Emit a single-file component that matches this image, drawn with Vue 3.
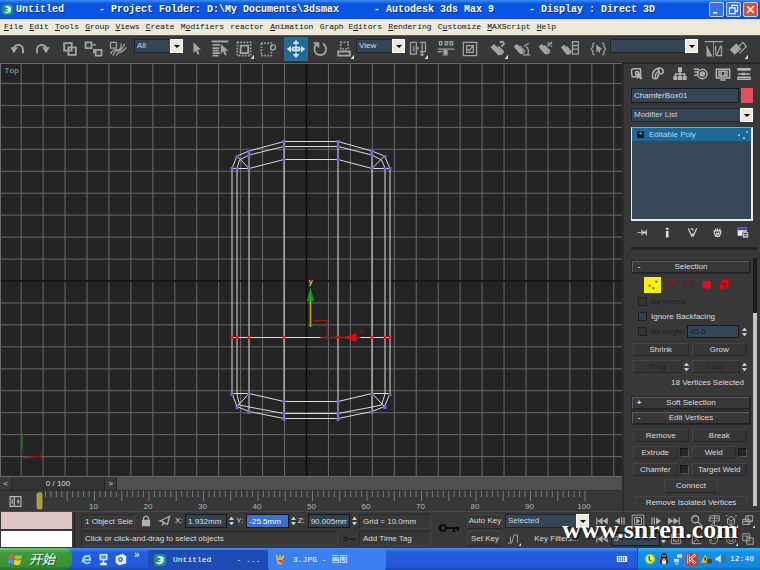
<script setup>
import { ref } from 'vue'

const menus = ['_File', '_Edit', '_Tools', '_Group', '_Views', '_Create', 'M_odifiers', 'reactor', '_Animation', 'Graph E_ditors', '_Rendering', 'C_ustomize', '_MAXScript', '_Help'].map((m) => {
  const i = m.indexOf('_')
  return i < 0 ? [m, '', ''] : [m.slice(0, i), m[i + 1], m.slice(i + 2)]
})

// Each icon: s = stroked outline, d = dashed outline, f = filled shape, c = flyout corner, w = heavy stroke
const icons = {
  undo: { s: 'M7 12V11Q8 7 13 7Q18 8 18 13V17', f: 'M3 10H12L7 17Z', w: 1 },
  redo: { s: 'M17 12V11Q16 7 11 7Q6 8 6 13V17', f: 'M21 10H12L17 17Z', w: 1 },
  link: { s: 'M5 5H14V14H5ZM10 10H19V19H10Z', w: 1 },
  unlink: { s: 'M2 4H9V11H2ZM14 13H21V20H14ZM11 7H14M12 12V17', w: 1 },
  bind: { s: 'M3 4H10V11H3ZM6 20Q8 13 12 14T20 6M10 20Q11 16 14 16T22 10M3 18Q6 12 11 13T16 5' },
  arrow: { f: 'M9 4V17L12 14L14 19L16 18L14 13H18Z' },
  byName: { s: 'M2 3H22M3 7H12M3 11H11M3 14H11M3 17H12M3 20H10', f: 'M13 6V18L16 15L18 20L20 19L18 14H22Z', w: 1 },
  region: { s: 'M8 8H17V17H8Z', d: 'M4 4H20V20H4Z', c: 1, w: 1 },
  crossing: { d: 'M4 5H16V20H4Z', s: 'M21 10A3 3 0 1 1 15 10A3 3 0 1 1 21 10' },
  move: { s: 'M12 4V20M4 12H20M8 10V14H16V10H8', f: 'M12 1L16 6H8ZM12 23L16 18H8ZM1 12L6 8V16ZM23 12L18 8V16Z' },
  rotate: { s: 'M8 6Q4 10 6 15T14 19T19 10L16 5', f: 'M3 4H11V11Z', w: 1 },
  scale: { s: 'M5 15H19V20H5Z', d: 'M8 4H17V12H8Z', c: 1, w: 1 },
  pivot: { s: 'M3 4H10V18H3ZM14 4H21V15H14M7 8V15M17 5V19', f: 'M10 11L13 9V13ZM14 18L17 21L20 18Z', c: 1 },
  manip: { s: 'M4 3V7H7V3ZM11 3V7H14V3ZM17 3V7H20V3ZM2 12H22M2 15H8M8 19H14', f: 'M9 13H14V18H9Z' },
  keyb: { s: 'M4 4H20V20H4ZM8 8H16V16H8ZM9 12L11 14L16 8' },
  snap: { s: 'M6 11L13 18Q17 19 18 15L12 9M14 4Q19 2 19 6L16 9', f: 'M3 10L7 6L17 15L13 20Z', w: 1, c: 1 },
  angle: { s: 'M4 10L10 17Q15 18 15 14L9 8M14 9L20 5M19 18Q21 13 17 9M13 19H22', f: 'M2 9L6 6L14 14L11 18Z' },
  percent: { s: 'M5 10L11 17Q16 18 16 14L10 8M14 8L19 4M14 4L15 5M18 8L19 9', f: 'M3 9L7 6L15 14L12 18Z', w: 1 },
  spin: { s: 'M3 11L8 18Q13 19 13 15L8 9M15 3H22V18H15ZM15 8H22M15 12H22', f: 'M1 10L5 7L13 15L10 19Z' },
  named: { s: 'M8 5Q5 5 6 9L4 12L6 15Q5 19 8 19M17 5Q20 5 19 9L21 12L19 15Q20 19 17 19', f: 'M10 7V16L12 14L14 17L15 13L17 12Z' },
  mirror: { s: 'M1 3H23M14 8V19M20 8L15 20H21V8', f: 'M3 7V21H10ZM12 3V22H11V3Z' },
  align: { s: 'M13 9L18 4L22 9L14 17', f: 'M2 13L10 5L16 12L8 19Z', c: 1 },
  tabCreate: { s: 'M4 6Q4 4 8 4H17Q18 8 17 16H5Q3 11 4 6M10 9Q14 7 15 11Q14 14 10 13Z', f: 'M12 10V20L15 17L18 21L20 18L17 15L20 14Z', w: 1 },
  tabModify: { s: 'M4 18Q2 6 13 3Q20 3 20 9Q19 12 13 12Q12 17 10 19Q6 20 4 18M8 18Q7 10 15 7M12 4L14 11', w: 1 },
  tabHier: { s: 'M12 8V12M5 17V12H19V17M12 12V17', f: 'M9 2H15V9H9ZM2 15H8V21H2ZM9 15H15V21H9ZM16 15H22V21H16Z', w: 1 },
  tabMotion: { s: 'M21 12A7 7 0 1 1 7 12A7 7 0 1 1 21 12M17 12A3 3 0 1 1 11 12A3 3 0 1 1 17 12M11 15L17 9M1 5H9M2 9H7M2 14H6', w: 1 },
  tabDisplay: { s: 'M2 5H22V18H2ZM6 8H18V15H6ZM9 8V15M15 8V15M8 21H16', w: 1 },
  tabUtil: { s: 'M3 12H9M14 12H21M3 17H21V20H3Z', f: 'M2 3H22V7H2ZM9 10H14V14H9Z', w: 1 },
  pin: { s: 'M3 12H9', f: 'M10 7H12V10H18V7H20V17H18V14H12V17H10Z' },
  showEnd: { f: 'M9 3H14V7H9ZM9 9H14V21H9Z' },
  unique: { s: 'M4 4L11 19L13 14M20 4L13 19M14 8L9 4', w: 1 },
  trash: { s: 'M6 9H18V13L15 19H9L6 13ZM9 9L8 5M12 9V4M15 9L17 5M9 13L15 15M10 17L15 12', w: 1 },
  lock: { s: 'M8 11V6Q12 1 16 6V11', f: 'M5 10H19V21H5Z', w: 1 },
  absolute: { s: 'M3 12L20 4L16 18L11 15L8 18L9 13Z', w: 1 },
  key: { s: 'M9 12A3 3 0 1 1 3 12A3 3 0 1 1 9 12M9 12H22M17 12V16M21 12V15', w: 1 },
  curve: { s: 'M2 19H8L12 5H18V18M6 8V18', c: 1 },
  toStart: { f: 'M2 6H4V18H2ZM4 12L13 6V18ZM13 12L22 6V18Z' },
  prev: { f: 'M3 12L12 6V18ZM14 6H16V18H14ZM18 6H20V18H18Z' },
  play: { s: 'M2 2H22V22H2ZM6 6H18V18H6Z', f: 'M9 7L16 12L9 17Z' },
  next: { f: 'M21 12L12 6V18ZM8 6H10V18H8ZM4 6H6V18H4Z' },
  toEnd: { f: 'M20 6H22V18H20ZM20 12L11 6V18ZM11 12L2 6V18Z' },
  zoomOne: { s: 'M15 9A6 6 0 1 1 3 9A6 6 0 1 1 15 9M13 13L21 21', w: 1 },
  zoomAll: { s: 'M3 12L6 3H21V12M3 12H21M13 3V20M3 7H21M6 20L13 13M6 20H18' },
  extents: { s: 'M6 8L12 4L18 8V16L12 20L6 16ZM6 8L12 12L18 8M12 12V20M3 3H6M19 3H22M3 21H6', c: 1 },
  extAll: { s: 'M8 3H20V12H8ZM3 9H15V18H3ZM3 13H20M12 3V18', c: 1 },
  fov: { s: 'M4 4V20H20M4 20L19 5M8 9L15 16' },
  pan: { s: 'M7 20L4 12L8 14V5L12 12V3L14 12L18 5V15L14 20Z' },
  arc: { s: 'M12 4A8 8 0 1 0 20 12M12 8A4 4 0 1 0 16 12M17 3L21 8', c: 1 },
  maxi: { s: 'M3 3H15V15H3ZM10 10H21V21H10ZM6 7H12V12' },
  mode: { s: 'M2 3H22V21H2ZM10 3V21M6 7V17M14 12H19M17 8V16', w: 1 },
}

const tools = [
  'undo', 'redo', '|', 'link', 'unlink', 'bind', '|', { name: 'Selection filter', v: 'All', k: 'short' },
  'arrow', 'byName', 'region', 'crossing', '|', 'move', 'rotate', 'scale',
  { name: 'Coordinate system', v: 'View', k: 'short' }, 'pivot', '|', 'manip', 'keyb', '|',
  'snap', 'angle', 'percent', 'spin', '|', 'named', { name: 'Selection sets', v: '', k: 'long' }, '|', 'mirror', 'align',
]
const tabs = ['tabCreate', 'tabModify', 'tabHier', 'tabMotion', 'tabDisplay', 'tabUtil']
const nav = ['zoomOne', 'zoomAll', 'extents', 'extAll', 'fov', 'pan', 'arc', 'maxi']
const play = ['toStart', 'prev', 'play', 'next', 'toEnd']

const vLines = Array.from({ length: 28 }, (_, i) => 306 + (i - 13) * 21.95)
const hLines = Array.from({ length: 19 }, (_, i) => 281 + (i - 10) * 21.95)
const frames = Array.from({ length: 101 }, (_, i) => ({ n: i, x: 40 + i * 5.45 }))

const columns = [231.5, 236.5, 248.5, 283.5, 337.5, 371.5, 384.5, 389.5]
const vertices = [
  [231, 168], [236, 156], [248, 151], [283, 141], [337, 141], [371, 151], [384, 156], [389, 168],
  [248, 155], [283, 146], [337, 146], [371, 155], [248, 168], [283, 159], [337, 159], [371, 168],
  [231, 394], [236, 407], [248, 412], [283, 419], [337, 419], [371, 412], [384, 407], [389, 394],
  [248, 394], [283, 401], [337, 401], [371, 394], [283, 413], [337, 413], [236, 168], [384, 168],
]
const coords = ref([{ a: 'X:', v: '1.932mm' }, { a: 'Y:', v: '-25.5mm', on: true }, { a: 'Z:', v: '90.005mm' }])
const objName = ref('ChamferBox01')
const angle = ref('45.0')
const frame = ref('0')
</script>

<template>
  <div class="app">
    <svg class="defs" aria-hidden="true">
      <symbol v-for="(ic, n) in icons" :id="'i-' + n" :key="n" viewBox="0 0 24 24">
        <path v-if="ic.s" :d="ic.s" fill="none" stroke="currentColor" :stroke-width="ic.w ? 2.2 : 1.5" />
        <path v-if="ic.d" :d="ic.d" fill="none" stroke="currentColor" stroke-width="2" stroke-dasharray="2 1.7" />
        <path v-if="ic.f" :d="ic.f" fill="currentColor" />
        <path v-if="ic.c" d="M24 19V24H20Z" fill="#ddd" />
      </symbol>
      <symbol id="max-logo" viewBox="0 0 16 16">
        <rect width="16" height="16" rx="4" fill="#258a86" />
        <path d="M3 5Q8 0 13 5Q14 11 9 13Q5 13 4 10Q8 12 10 9Q8 10 5 8Q9 8 9 6Q6 4 3 5" fill="#d9fff0" />
        <path d="M3 11Q8 16 13 10" fill="none" stroke="#7ff0b0" stroke-width="1.5" />
      </symbol>
    </svg>

    <header class="title">
      <svg class="logo"><use href="#max-logo" /></svg>
      <h1><span>Untitled</span><span>- Project Folder: D:\My Documents\3dsmax</span><span>- Autodesk 3ds Max 9</span><span>- Display : Direct 3D</span></h1>
      <div class="winbtns">
        <button aria-label="Minimize"><svg viewBox="0 0 16 16"><path d="M4 11H9V13H4Z" fill="#fff" /></svg></button>
        <button aria-label="Restore"><svg viewBox="0 0 16 16"><path d="M6 6V3H13V10H10M3 6H10V13H3Z" fill="none" stroke="#fff" stroke-width="1.4" /></svg></button>
        <button class="close" aria-label="Close"><svg viewBox="0 0 16 16"><path d="M4 4L12 12M12 4L4 12" stroke="#fff" stroke-width="2" /></svg></button>
      </div>
    </header>

    <nav class="menu">
      <div class="menu-in">
        <button v-for="m in menus" :key="m.join('')">{{ m[0] }}<u>{{ m[1] }}</u>{{ m[2] }}</button>
      </div>
    </nav>

    <div class="toolbar">
      <template v-for="(t, i) in tools" :key="i">
        <i v-if="t === '|'" class="sep"></i>
        <button v-else-if="typeof t === 'string'" class="tool" :class="{ active: t === 'move' }" :aria-label="t">
          <svg><use :href="'#i-' + t" /></svg>
        </button>
        <span v-else class="combo" :class="t.k">
          <select :aria-label="t.name"><option>{{ t.v }}</option></select><i class="drop"></i>
        </span>
      </template>
    </div>

    <main class="work">
      <section class="left">
        <svg class="view" viewBox="0 64 622 412" preserveAspectRatio="xMidYMid slice">
          <g stroke="#696969">
            <line v-for="x in vLines" :key="'v' + x" :x1="x" :x2="x" y1="64" y2="476" />
            <line v-for="y in hLines" :key="'h' + y" :y1="y" :y2="y" x1="0" x2="622" />
          </g>
          <path d="M306 64V476M0 281H622" stroke="#0a0a0a" stroke-width="1.4" />
          <text x="4" y="73" class="vp-name">Top</text>
          <g fill="none" stroke="#dcdcdc">
            <line v-for="x in columns" :key="x" :x1="x" :x2="x" y1="168" y2="394" />
            <path d="M231.5 168.500L236.500 156L248.500 151L283.500 141.500H337.500L371.500 151L384 156L389.500 168.500" />
            <path d="M236.500 168L239 160L248.500 155L283.500 146.500H337.500L371.500 155L381 160L384.500 168" />
            <path d="M231.500 168.500H248.500L283.500 159.500H337.500L371.500 168.500H389.500" />
            <path d="M236.500 156L248.500 168.500V151M384 156L371.500 168.500V151M283.500 141V168M337.500 141V168" />
            <path d="M231.500 393.500L236.500 406.500L248.500 411.500L283.500 418.500H337.500L371.500 411.500L384 406.500L389.500 393.500" />
            <path d="M236.500 394L239 405L248.500 407L283.500 413.500H337.500L371.500 407L381 405L384.500 394" />
            <path d="M231.500 393.500H248.500L283.500 401.500H337.500L371.500 393.500H389.500" />
            <path d="M236.500 406.500L248.500 393.500V412M384 406.500L371.500 393.500V412M283.500 394V419M337.500 394V419" />
            <path d="M231 337.500H390" />
          </g>
          <rect v-for="(p, i) in vertices" :key="i" :x="p[0] - 1" :y="p[1] - 1" width="3" height="3" fill="#6c66dc" />
          <rect v-for="x in columns" :key="'r' + x" :x="x - 1.500" y="336" width="3" height="3" fill="#e02020" />
          <path d="M310 300V327" stroke="#b5b520" stroke-width="1.500" />
          <path d="M306.500 301L310 287L313.500 301Z" fill="#12a012" />
          <path d="M313 320.500H326.500V337.500" fill="none" stroke="#8a2020" />
          <path d="M320 337.500H360" stroke="#c01010" stroke-width="1.500" />
          <path d="M343 337.500L356 333V342Z" fill="#e00808" />
          <text x="308" y="284" class="axis-y">y</text>
          <text x="359" y="333" class="axis-x">x</text>
          <path d="M22 433V450" stroke="#1f5f1f" /><path d="M23 458L41 456" stroke="#a01414" stroke-width="1.500" />
          <rect x="21" y="451" width="3" height="3" fill="#1c2a70" />
          <text x="39" y="455" class="axis-x">x</text>
        </svg>
        <div class="slider">
          <button aria-label="Previous frame">&lt;</button><span>0 / 100</span><button aria-label="Next frame">&gt;</button>
        </div>
        <div class="track">
          <svg viewBox="0 0 622 20">
            <line v-for="f in frames" :key="f.n" :x1="f.x" :x2="f.x" y1="0" :y2="f.n % 5 ? 6 : 10" stroke="#7c7c7c" />
            <rect x="37" y="2" width="5" height="16" rx="1" fill="#a39f32" stroke="#c9c55a" stroke-width=".6" />
            <text v-for="n in 10" :key="n" :x="39 + n * 54.5" y="18" text-anchor="middle">{{ n * 10 }}</text>
            <g transform="translate(9 4)" color="#b5b5b5"><use href="#i-mode" width="13" height="13" /></g>
          </svg>
        </div>
      </section>

      <aside class="panel">
        <div class="tabs">
          <button v-for="t in tabs" :key="t" :aria-label="t"><svg><use :href="'#i-' + t" /></svg></button>
        </div>
        <div class="namerow"><input v-model="objName" aria-label="Object name"><button class="swatch" aria-label="Object color"></button></div>
        <span class="combo modlist"><select aria-label="Modifier List"><option>Modifier List</option></select><i class="drop"></i></span>
        <div class="stack">
          <div class="stackrow"><i class="plus">+</i><span>Editable Poly</span><svg viewBox="0 0 12 12"><path d="M1 5h2v2h-2zM6 8h2v2h-2zM9 2h2v2h-2z" fill="#6fc0e8" /></svg></div>
        </div>
        <div class="stacktools">
          <button aria-label="Pin stack"><svg><use href="#i-pin" /></svg></button>
          <button aria-label="Show end result"><svg><use href="#i-showEnd" /></svg></button>
          <button aria-label="Make unique"><svg><use href="#i-unique" /></svg></button>
          <button aria-label="Remove modifier"><svg><use href="#i-trash" /></svg></button>
          <button aria-label="Configure"><svg viewBox="0 0 24 24"><path d="M3 3H20V18H3Z" fill="#eee" /><path d="M3 3H20V8H3Z" fill="#4048b0" /><path d="M12 11H23V22H12Z" fill="#ddd" stroke="#333" /><path d="M14 14H21M14 18H21" stroke="#3038a0" stroke-width="2" /></svg></button>
        </div>

        <div class="rolls">
          <div class="roll-in">
            <button class="head"><b>-</b><span>Selection</span></button>
            <div class="subs">
              <button class="on" aria-label="Vertex"><svg viewBox="0 0 16 16"><path d="M4 8h2v2h-2zM8 11h2v2h-2zM11 4h2v2h-2z" fill="#5a5400" /></svg></button>
              <button aria-label="Edge"><svg viewBox="0 0 16 16"><path d="M6 13L9 8L12 4H5" fill="none" stroke="#8a1a1e" stroke-width="1.500" /></svg></button>
              <button aria-label="Border"><svg viewBox="0 0 16 16"><path d="M5 13L4 5L11 4L12 12" fill="none" stroke="#701a1e" stroke-width="1.500" /></svg></button>
              <button aria-label="Polygon"><svg viewBox="0 0 16 16"><path d="M4 4H12L13 11L9 13L3 11Z" fill="#e01018" /></svg></button>
              <button aria-label="Element"><svg viewBox="0 0 16 16"><path d="M6 3H13L12 10L9 13H3L3 6Z" fill="#c80c18" /><path d="M4 7H9V12" fill="none" stroke="#701018" /></svg></button>
            </div>
            <label class="check off"><input type="checkbox" disabled><span>By Vertex</span></label>
            <label class="check"><input type="checkbox"><span>Ignore Backfacing</span></label>
            <div class="anglerow">
              <label class="check off"><input type="checkbox" disabled><span>By Angle:</span></label>
              <input v-model="angle" class="num" disabled aria-label="Angle"><i class="spinner"></i>
            </div>
            <div class="pair"><button>Shrink</button><button>Grow</button></div>
            <div class="pair dim"><span><button disabled>Ring</button><i class="spinner"></i></span><span><button disabled>Loop</button><i class="spinner"></i></span></div>
            <p class="count">18 Vertices Selected</p>
            <button class="head"><b>+</b><span>Soft Selection</span></button>
            <button class="head"><b>-</b><span>Edit Vertices</span></button>
            <div class="pair"><button>Remove</button><button>Break</button></div>
            <div class="pair"><span><button>Extrude</button><button class="box" aria-label="Extrude settings"></button></span><span><button>Weld</button><button class="box" aria-label="Weld settings"></button></span></div>
            <div class="pair"><span><button>Chamfer</button><button class="box" aria-label="Chamfer settings"></button></span><button>Target Weld</button></div>
            <button class="mid">Connect</button>
            <button class="mid wide">Remove Isolated Vertices</button>
          </div>
          <div class="scroll"><i></i></div>
        </div>
      </aside>
    </main>

    <footer class="status">
      <div class="listener"><i></i><i></i></div>
      <div class="prompts">
        <div class="line">
          <span class="cell sel">1 Object Sele</span>
          <button class="ic" aria-label="Lock selection"><svg><use href="#i-lock" /></svg></button>
          <button class="ic" aria-label="Absolute mode"><svg><use href="#i-absolute" /></svg></button>
          <label v-for="c in coords" :key="c.a" class="coord"><span>{{ c.a }}</span><input v-model="c.v" :class="{ picked: c.on }"><i class="spinner"></i></label>
          <span class="cell grid">Grid = 10.0mm</span>
        </div>
        <div class="line">
          <span class="cell grow">Click or click-and-drag to select objects</span>
          <button class="ic dimmed" aria-label="Time tag"><svg><use href="#i-key" /></svg></button>
          <button class="cell grid">Add Time Tag</button>
        </div>
      </div>
      <button class="bigkey" aria-label="Set keys"><svg><use href="#i-key" /></svg></button>
      <div class="keys">
        <div class="line"><button class="keybtn">Auto Key</button><span class="combo keysel"><select aria-label="Key target"><option>Selected</option></select><i class="drop"></i></span></div>
        <div class="line"><button class="keybtn">Set Key</button><button class="ic" aria-label="Tangents"><svg><use href="#i-curve" /></svg></button><button class="filters">Key Filters...</button></div>
      </div>
      <div class="playback">
        <div class="line"><button v-for="p in play" :key="p" class="ic" :aria-label="p"><svg><use :href="'#i-' + p" /></svg></button></div>
        <div class="line"><button class="ic" aria-label="Key mode"><svg><use href="#i-toStart" /></svg></button><input v-model="frame" class="frame" aria-label="Current frame"><i class="spinner"></i><button class="ic" aria-label="Time configuration"><svg><use href="#i-keyb" /></svg></button></div>
      </div>
      <div class="navs"><button v-for="n in nav" :key="n" class="ic" :aria-label="n"><svg><use :href="'#i-' + n" /></svg></button></div>
      <strong class="mark">www.snren.com</strong>
    </footer>

    <div class="taskbar">
      <button class="start">
        <svg viewBox="0 0 16 16"><path d="M1 4Q4 1 7 3L6 7Q3 6 0 8Z" fill="#f0592a" /><path d="M8 3Q11 5 15 3L14 7Q10 9 7 7Z" fill="#8ed13c" /><path d="M0 9Q3 7 6 8L5 13Q2 11 -1 13Z" fill="#4c8ef4" /><path d="M7 8Q10 10 14 8L13 13Q9 15 6 13Z" fill="#fcc83a" /></svg>
        <span>开始</span>
      </button>
      <div class="quick">
        <a href="#" aria-label="Browser"><svg viewBox="0 0 16 16"><path d="M12.500 11Q8 15 4 10Q3 4 8 3.500Q13 4 12.500 8.500H5" fill="none" stroke="#8fd6ff" stroke-width="2.200" /><path d="M2 12Q2 8 13 2" fill="none" stroke="#d8f0ff" /></svg></a>
        <a href="#" aria-label="Desktop"><svg viewBox="0 0 16 16"><path d="M3 1H13V9H3Z" fill="#bfe4ff" /><path d="M5 3H11V7H5Z" fill="#4a98e8" /><path d="M7 9H9V12H12V15H4V12H7Z" fill="#e8f4ff" /></svg></a>
        <a href="#" aria-label="Player"><svg viewBox="0 0 16 16"><path d="M2 4L11 1L15 4V13L6 15L2 12Z" fill="#dfeaf2" /><path d="M11 8A3 3 0 1 1 5 8A3 3 0 1 1 11 8" fill="#3f7fb0" /><circle cx="8" cy="8" r="1" fill="#fff" /></svg></a>
        <span>»</span>
      </div>
      <button class="task now"><svg><use href="#max-logo" /></svg><span>Untitled</span><em>- ...</em></button>
      <button class="task"><svg viewBox="0 0 16 16"><path d="M3 6H12L11 14H5Z" fill="#d9a860" /><path d="M5 7L3 1M8 7V1M10 7L13 2" stroke="#f5c020" stroke-width="2" /><path d="M6 9H10V12" stroke="#c03828" stroke-width="2" fill="none" /></svg><span>3.JPG - 画图</span></button>
      <svg class="lang" viewBox="0 0 16 16"><path d="M1 4H15V12H1Z" fill="#dce6f4" /><path d="M3 6.500H13M3 9.500H13" stroke="#1c3884" stroke-width="1.500" stroke-dasharray="1.500 1" /></svg>
      <div class="tray">
        <svg viewBox="0 0 16 16"><circle cx="8" cy="8" r="7" fill="#98c838" /><circle cx="8" cy="8" r="5" fill="#e8f070" /><path d="M7 4V9L10 11" fill="none" stroke="#2c8020" stroke-width="2" /></svg>
        <svg viewBox="0 0 16 16"><path d="M8 0Q13 1 12 7Q15 12 12 14H4Q1 12 4 7Q3 1 8 0" fill="#151515" /><ellipse cx="8" cy="11" rx="3" ry="4" fill="#fff" /><path d="M3 7Q8 10 13 7V10H3Z" fill="#d82020" /><circle cx="6.500" cy="4" r="1" fill="#fff" /><circle cx="9.500" cy="4" r="1" fill="#fff" /></svg>
        <svg viewBox="0 0 16 16"><path d="M6 1H14V7H6ZM2 7H10V13H2Z" fill="#b8dcff" stroke="#3868b8" /><path d="M4 14.500H9" stroke="#dff" /></svg>
        <svg viewBox="0 0 16 16"><path d="M0 0H16V16H0Z" fill="#e03028" /><path d="M3 2V14M13 2L5 8L13 14" fill="none" stroke="#fff" stroke-width="3" /><path d="M3 2V14M13 2L5 8L13 14" fill="none" stroke="#200" stroke-width="1" /></svg>
        <svg viewBox="0 0 16 16"><path d="M1 13L7 2L12 13Z" fill="#f4c020" /><path d="M7 6V10" stroke="#222" stroke-width="2" /><path d="M9 8H16V14H9Z" fill="#594030" /></svg>
        <svg viewBox="0 0 16 16"><path d="M2 6H5L9 2V13L5 10H2Z" fill="#d9dde2" /><path d="M11 4Q14 8 11 12M13 2Q17 8 12 14" fill="none" stroke="#58616e" stroke-width="1.500" /></svg>
        <time>12:40</time>
      </div>
    </div>
  </div>
</template>

<style>
body { margin: 0; background: #383838; }
</style>

<style scoped>
.app { position: relative; display: flex; flex-direction: column; min-height: 100vh; background: #383838; color: #dcdcdc; font: 8px/12px "Liberation Sans", "Noto Sans CJK SC", sans-serif; overflow: hidden; }
.app * { box-sizing: border-box; }
.defs { position: absolute; width: 0; height: 0; }
button { border: 0; padding: 0; margin: 0; background: none; color: inherit; font: inherit; white-space: nowrap; }
input, select { font: inherit; color: inherit; border: 0; border-radius: 0; padding: 0 2px; margin: 0; min-width: 0; appearance: none; background: #344655; opacity: 1; }
i { font-style: normal; }

.title { display: flex; align-items: center; height: 19px; padding: 0 2px; gap: 3px; background: linear-gradient(#3a8cf8, #0a54e0 20%, #0657ea 70%, #0a50d8); }
.logo { width: 11px; height: 11px; flex: none; }
.title h1 { display: flex; flex: 1; gap: 35px; margin: 0; white-space: pre; font: bold 10px/14px "Liberation Mono", monospace; color: #fff; text-shadow: 1px 1px #0a2c80; }
.winbtns { display: flex; gap: 2px; }
.winbtns button { width: 15px; height: 15px; border: 1px solid #c6d6fa; border-radius: 2px; background: #3a70e4; }
.winbtns .close { background: #e0512c; }
.winbtns svg { display: block; width: 13px; height: 13px; }

.menu { height: 16px; padding: 0 4px; background: #ece9d8; color: #111; }
.menu-in { display: flex; justify-content: space-between; max-width: 552px; }
.menu button { font: 8px/16px "Liberation Mono", monospace; }

.toolbar { display: flex; align-items: center; height: 28px; padding: 0 6px; border-top: 1px solid #555; border-bottom: 1px solid #2a2a2a; }
.tool { width: 24px; height: 24px; color: #a4a4a4; display: grid; place-items: center; flex: none; }
.tool svg { width: 20px; height: 20px; }
.tool.active { background: #246a96; color: #cfe0ec; }
.sep { width: 4px; flex: none; }
.combo { display: grid; grid-template-columns: 1fr 13px; height: 14px; color: #ccd4dc; }
.combo select { grid-area: 1 / 1 / 2 / 3; width: 100%; border: 1px solid #20262c; }
.drop { grid-area: 1 / 2; display: grid; place-items: center; background: #ece9d8; border: 1px solid #fff; pointer-events: none; }
.drop::before { content: ""; border: 3px solid transparent; border-top-color: #000; border-bottom: 0; }
.combo.short { width: 49px; margin: 0 1px 6px 0; flex: none; }
.combo.long { flex: 1; max-width: 88px; margin-bottom: 6px; }

.work { display: flex; flex: 1; min-height: 0; }
.left { display: flex; flex-direction: column; flex: 1; min-width: 0; }
.view { flex: 1 1 412px; min-height: 0; width: 100%; background: #242424; border-top: 1px solid #6a6a6a; border-left: 1px solid #6a6a6a; }
.vp-name { font: 8px "Liberation Mono", monospace; fill: #a8a8a8; }
.axis-y { font: bold 8px "Liberation Sans", sans-serif; fill: #c8c880; }
.axis-x { font: 7px "Liberation Sans", sans-serif; fill: #a01818; }
.slider { display: flex; height: 14px; border-top: 1px solid #6c6c6c; background: #505050; line-height: 13px; }
.slider button { width: 12px; background: #3a3a3a; border-right: 1px solid #252525; }
.slider span { width: 93px; text-align: center; background: #333; border-right: 1px solid #222; }
.track { height: 21px; border-top: 1px solid #2c2c2c; }
.track svg { display: block; width: 100%; height: 20px; }
.track text { font: 8px "Liberation Sans", sans-serif; fill: #b4b4b4; }

.panel { display: flex; flex-direction: column; width: 138px; flex: none; padding: 2px 3px 5px 7px; border-top: 1px solid #222; border-left: 2px solid #2b2b2b; }
.tabs { display: flex; height: 22px; margin: 0 2px 0 -5px; }
.tabs button { flex: 1; display: grid; justify-items: center; align-items: start; color: #b4b4b4; }
.tabs svg { width: 16px; height: 16px; }
.namerow { display: flex; gap: 2px; margin: 0 4px 5px 0; height: 15px; }
.namerow input { flex: 1; border: 1px solid #15191d; }
.swatch { width: 12px; background: #e05058; }
.modlist { margin: 0 4px 5px 0; }
.stack { height: 94px; margin-right: 4px; background: #364858; border: 2px solid #e8e8e8; border-top-color: #9aa0a4; border-left-width: 1px; border-top-width: 1px; }
.stackrow { display: flex; align-items: center; height: 13px; padding: 0 2px 0 5px; gap: 5px; background: #1d6898; color: #a8d8f4; }
.plus { width: 7px; height: 7px; background: #061830; font: 7px/7px "Liberation Mono", monospace; text-align: center; }
.stackrow span { flex: 1; }
.stackrow svg { width: 12px; height: 12px; }
.stacktools { display: flex; justify-content: space-between; padding: 5px 8px 8px 5px; color: #d8d8d8; border-bottom: 3px solid #262626; }
.stacktools svg { width: 13px; height: 13px; display: block; }
.rolls { display: flex; gap: 3px; flex: 1 1 0; min-height: 0; overflow: hidden; padding-top: 8px; }
.roll-in { flex: 1; min-width: 0; display: flex; flex-direction: column; padding: 3px 0 0 1px; }
.roll-in > * { flex: none; }
.head { display: flex; height: 12px; line-height: 10px; border: 1px solid #5e5e5e; border-color: #5e5e5e #222 #222 #5e5e5e; outline: 1px solid #282828; margin-bottom: 3px; }
.head b { width: 12px; }
.head span { flex: 1; text-align: center; padding-right: 12px; }
.subs { display: flex; gap: 1px; padding-left: 12px; height: 17px; margin-bottom: 1px; align-items: center; }
.subs button { width: 17px; height: 16px; }
.subs svg { width: 15px; height: 15px; display: block; margin: auto; }
.subs .on { background: #f8f010; }
.check { display: flex; align-items: center; gap: 4px; height: 15px; padding-left: 6px; color: #dcdcdc; white-space: nowrap; }
.check input { width: 9px; height: 9px; padding: 0; flex: none; background: #2f4152; border: 1px solid #1c242c; }
.check.off { color: #202020; }
.check.off input { background: #343434; border-color: #222; }
.anglerow { display: flex; align-items: center; gap: 3px; padding-right: 3px; margin-bottom: 2px; }
.anglerow .check { width: 52px; }
.num { flex: 1; height: 13px; border: 1px solid #14181c; color: #141c24; }
.spinner { width: 5px; height: 10px; flex: none; display: flex; flex-direction: column; justify-content: space-between; padding: 1px 0; }
.spinner::before, .spinner::after { content: ""; border: 2px solid transparent; }
.spinner::before { border-top: 0; border-bottom: 3px solid #c8c8c8; }
.spinner::after { border-bottom: 0; border-top: 3px solid #c8c8c8; }
.pair { display: grid; grid-template-columns: 1fr 1fr; gap: 3px; height: 13px; margin: 2px 3px 2px 1px; }
.pair button { border: 1px solid #444; border-color: #444 #2a2a2a #2a2a2a #444; line-height: 11px; background: #363636; }
.pair span { display: flex; align-items: center; gap: 2px; }
.pair span button { flex: 1; height: 13px; }
.dim button { color: #202020; }
.pair span .box { flex: none; width: 9px; height: 9px; background: #242424; border-color: #151515 #555 #555 #151515; }
.count { margin: 2px 6px 8px 0; text-align: right; height: 12px; }
.mid { align-self: center; width: 54px; height: 14px; margin: 1px 0 2px; border: 1px solid #444; border-bottom-color: #2a2a2a; line-height: 12px; }
.mid.wide { width: 112px; }
.scroll { width: 4px; background: #1c1c1c; display: flex; flex-direction: column; justify-content: flex-end; }
.scroll i { height: 78%; background: #c4c4c4; }

.status { position: relative; display: flex; height: 37px; gap: 4px; padding-right: 4px; border-top: 1px solid #484848; }
.listener { width: 75px; flex: none; display: grid; grid-template-rows: 1fr 1fr; gap: 2px; padding: 0 2px 1px 1px; border-right: 1px solid #222; }
.listener i { background: #e0c4c8; }
.listener i + i { background: #fff; }
.prompts { display: flex; flex-direction: column; justify-content: space-evenly; flex: 1; max-width: 352px; min-width: 0; padding-left: 2px; }
.line { display: flex; align-items: center; height: 16px; gap: 2px; }
.cell { height: 15px; line-height: 13px; padding: 0 3px; border: 1px solid #292929; border-color: #292929 #444 #444 #292929; white-space: nowrap; overflow: hidden; text-align: left; }
.sel { width: 54px; flex: none; }
.grow { flex: 1; }
.grid { width: 72px; flex: none; }
.ic { width: 17px; flex: none; color: #b0b0b0; display: grid; place-items: center; }
.ic svg { width: 14px; height: 14px; }
.ic.dimmed { color: #222; }
.coord { display: flex; flex: 1; align-items: center; gap: 2px; min-width: 0; }
.coord span { width: 8px; }
.coord input { flex: 1; width: 20px; height: 14px; border: 1px solid #15191d; padding: 0 2px; background: #304252; }
.coord .picked { background: #3a70d0; color: #fff; }
.bigkey { width: 28px; color: #0c0c0c; flex: none; }
.bigkey svg { width: 24px; height: 24px; }
.keys { display: flex; flex-direction: column; justify-content: space-evenly; width: 122px; flex: none; }
.keybtn { width: 36px; height: 15px; border: 1px solid #444; border-bottom-color: #252525; }
.keysel { flex: 1; }
.filters { flex: 1; }
.playback { display: flex; flex-direction: column; justify-content: space-evenly; width: 91px; flex: none; }
.playback .line { gap: 1px; }
.frame { flex: 1; width: 40px; height: 14px; border: 1px solid #15191d; }
.navs { display: grid; grid-template-columns: repeat(4, 17px); margin-left: auto; }
.mark { position: absolute; right: 22px; top: 1px; font: bold 26px/34px "Liberation Serif", serif; color: #fff; text-shadow: 1px 1px 2px #000; }

.taskbar { display: flex; height: 22px; align-items: stretch; background: linear-gradient(#4a90f8, #245edc 18%, #2458d8 85%, #1a44b0); color: #fff; }
.start { display: flex; align-items: center; gap: 6px; width: 72px; padding-left: 8px; border-radius: 0 8px 8px 0; background: linear-gradient(#7cc878, #3c9a3c 20%, #369236 80%, #246e28); flex: none; font: italic 13px/20px "Noto Sans CJK SC", sans-serif; text-shadow: 1px 1px #1c501c; }
.start svg { width: 15px; height: 15px; }
.quick { display: flex; align-items: center; gap: 4px; width: 76px; padding-left: 8px; flex: none; }
.quick svg { display: block; width: 13px; height: 13px; }
.quick span { margin: -8px 0 0 3px; font-size: 10px; }
.task { display: flex; align-items: center; gap: 7px; flex: 0 1 118px; margin-top: 2px; padding-left: 6px; border-radius: 2px; background: #3c80f0; font: 8px/18px "Liberation Mono", "Noto Sans CJK SC", monospace; text-align: left; }
.task.now { background: #1c4cb4; flex-basis: 120px; }
.task svg { width: 12px; height: 12px; flex: none; }
.task em { margin-left: 18px; font-style: normal; }
.lang { width: 12px; margin-left: auto; margin-right: 9px; }
.tray { display: flex; align-items: center; gap: 2px; width: 123px; padding-left: 6px; background: linear-gradient(#3cb4f8, #1290e8 20%, #1088e0 85%, #0c68b8); border-left: 1px solid #0c50a8; }
.tray svg { width: 12px; height: 12px; flex: none; }
.tray time { margin-left: 2px; font: 8px/18px "Liberation Mono", monospace; }
</style>
